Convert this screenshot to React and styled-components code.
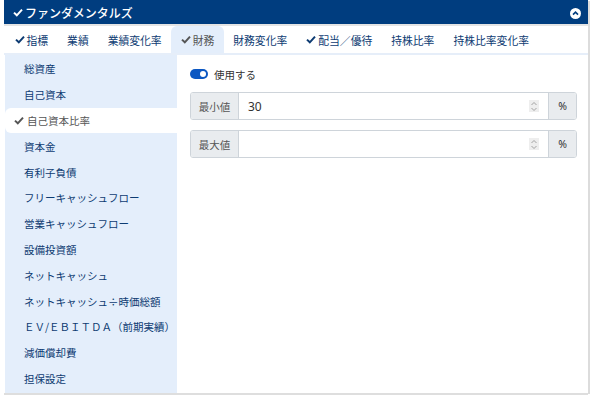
import React from "react"
import styled, { createGlobalStyle } from "styled-components"

const GlobalStyle = createGlobalStyle`
  html, body {
    margin: 0;
    padding: 0;
    background: #fff;
    font-family: "Noto Sans CJK JP", "Noto Sans", sans-serif;
  }
`

const tabs = [
  { label: "指標", checked: true },
  { label: "業績" },
  { label: "業績変化率" },
  { label: "財務", checked: true, active: true },
  { label: "財務変化率" },
  { label: "配当／優待", checked: true },
  { label: "持株比率" },
  { label: "持株比率変化率" },
]

const items = [
  "総資産",
  "自己資本",
  "自己資本比率",
  "資本金",
  "有利子負債",
  "フリーキャッシュフロー",
  "営業キャッシュフロー",
  "設備投資額",
  "ネットキャッシュ",
  "ネットキャッシュ÷時価総額",
  "ＥＶ/ＥＢＩＴＤＡ（前期実績）",
  "減価償却費",
  "担保設定",
]

function Check({ color = "currentColor" }) {
  return (
    <svg width="10" height="9" viewBox="0 0 10 9">
      <path d="M1 4.6 L3.8 7.3 L9 1.6" fill="none" stroke={color} strokeWidth="2" />
    </svg>
  )
}

function Spinner() {
  return (
    <SpinBox>
      <svg width="8" height="11" viewBox="0 0 8 11">
        <path d="M1.5 4 L4 1.5 L6.5 4 M1.5 7 L4 9.5 L6.5 7" fill="none" stroke="#999" strokeWidth="0.9" />
      </svg>
    </SpinBox>
  )
}

export default function App() {
  const selected = 2
  return (
    <>
      <GlobalStyle />
      <Page>
        <Card>
          <Header>
            <HeaderTitle>
              <Check color="#fff" />
              ファンダメンタルズ
            </HeaderTitle>
            <CollapseIcon>
              <svg width="11" height="11" viewBox="0 0 11 11">
                <circle cx="5.5" cy="5.5" r="5.5" fill="#fff" />
                <path d="M3 6.6 L5.5 4.1 L8 6.6" fill="none" stroke="#003d7f" strokeWidth="1.6" />
              </svg>
            </CollapseIcon>
          </Header>
          <TabBar>
            {tabs.map((t) => (
              <Tab key={t.label} active={t.active}>
                {t.checked && <Check />}
                {t.label}
              </Tab>
            ))}
          </TabBar>
          <Body>
            <Sidebar>
              {items.map((it, i) => (
                <SideItem key={it} selected={i === selected}>
                  {i === selected && <Check color="#555" />}
                  {it}
                </SideItem>
              ))}
            </Sidebar>
            <Panel>
              <ToggleRow>
                <Toggle>
                  <Knob />
                </Toggle>
                使用する
              </ToggleRow>
              <InputGroup>
                <Addon>最小値</Addon>
                <Field>
                  <Value>30</Value>
                  <Spinner />
                </Field>
                <Suffix>%</Suffix>
              </InputGroup>
              <InputGroup>
                <Addon>最大値</Addon>
                <Field>
                  <Value />
                  <Spinner />
                </Field>
                <Suffix>%</Suffix>
              </InputGroup>
            </Panel>
          </Body>
        </Card>
      </Page>
    </>
  )
}

const Page = styled.div`
  width: 599px;
  height: 395px;
  overflow: hidden;
  padding-left: 4px;
  box-sizing: border-box;
`

const Card = styled.div`
  width: 584px;
  height: 395px;
  box-shadow: 3px 0 0 -1px #dcdcdc;
  display: flex;
  flex-direction: column;
`

const Header = styled.div`
  height: 24px;
  background: #003d7f;
  border-bottom: 2px solid #e4e4e4;
  display: flex;
  align-items: center;
  justify-content: space-between;
  padding: 0 7px 0 9px;
  flex-shrink: 0;
`

const HeaderTitle = styled.div`
  color: #fff;
  font-size: 12px;
  font-weight: 500;
  display: flex;
  align-items: center;
  gap: 2px;
`

const CollapseIcon = styled.div`
  display: flex;
  margin-top: 2px;
`

const TabBar = styled.div`
  display: flex;
  height: 27px;
  padding-left: 1px;
  border-bottom: 2px solid #e6eef9;
  flex-shrink: 0;
`

const Tab = styled.div`
  display: flex;
  align-items: center;
  gap: 2px;
  padding: 0 9.5px;
  font-size: 10.8px;
  font-weight: 400;
  color: ${(p) => (p.active ? "#555" : "#0d3b72")};
  background: ${(p) => (p.active ? "#e4eefb" : "transparent")};
  border-radius: 6px 6px 0 0;
  white-space: nowrap;
`

const Body = styled.div`
  display: flex;
  border-bottom: 2px solid #dedede;
  height: 338px;
  flex: none;
`

const Sidebar = styled.div`
  width: 172px;
  background: #e4eefb;
  padding-top: 1px;
  margin-left: 1px;
`

const SideItem = styled.div`
  height: 25.8px;
  display: flex;
  align-items: center;
  gap: 3px;
  padding-left: ${(p) => (p.selected ? "9px" : "19px")};
  font-size: 10.5px;
  color: ${(p) => (p.selected ? "#555" : "#0d3b72")};
  background: ${(p) => (p.selected ? "#fff" : "transparent")};
  border-radius: ${(p) => (p.selected ? "6px 0 0 6px" : "0")};
  white-space: nowrap;
`

const Panel = styled.div`
  flex: 1;
  padding: 12px 11px 0 13px;
  display: flex;
  flex-direction: column;
  gap: 10px;
`

const ToggleRow = styled.div`
  display: flex;
  align-items: center;
  gap: 6px;
  font-size: 10.5px;
  color: #333;
  height: 14px;
  margin-bottom: 1px;
`

const Toggle = styled.div`
  width: 18px;
  height: 10px;
  border-radius: 5px;
  background: #0b57c2;
  position: relative;
`

const Knob = styled.div`
  position: absolute;
  right: 2px;
  top: 2px;
  width: 6px;
  height: 6px;
  border-radius: 50%;
  background: #fff;
`

const InputGroup = styled.div`
  display: flex;
  height: 28px;
  border: 1px solid #ced4da;
  border-radius: 3px;
  box-sizing: border-box;
  overflow: hidden;
`

const Addon = styled.div`
  width: 47px;
  background: #e9ecef;
  border-right: 1px solid #ced4da;
  display: flex;
  align-items: center;
  justify-content: center;
  font-size: 10.5px;
  color: #555;
`

const Field = styled.div`
  flex: 1;
  display: flex;
  align-items: center;
  justify-content: space-between;
  padding: 0 9px 0 9px;
  background: #fff;
`

const Value = styled.span`
  font-family: "Noto Sans", sans-serif;
  font-size: 12px;
  color: #333;
`

const SpinBox = styled.div`
  width: 10px;
  height: 12px;
  background: #eee;
  display: flex;
  align-items: center;
  justify-content: center;
`

const Suffix = styled.div`
  width: 27px;
  background: #e9ecef;
  border-left: 1px solid #ced4da;
  display: flex;
  align-items: center;
  justify-content: center;
  font-family: "Noto Sans", sans-serif;
  font-size: 10.5px;
  color: #333;
`
